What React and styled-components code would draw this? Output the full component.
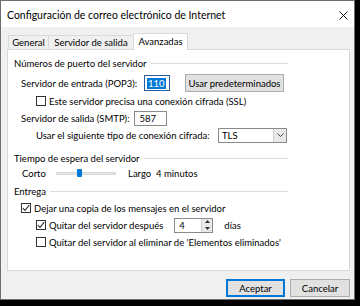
import styled, { createGlobalStyle } from 'styled-components';

const GlobalStyle = createGlobalStyle`
  html, body {
    margin: 0;
    background: #000;
  }

  body {
    font-family: Lato, 'Segoe UI', sans-serif;
    font-size: 9.5px;
    color: #000;
  }
`;

const Window = styled.div`
  box-sizing: border-box;
  width: 355px;
  height: 300px;
  display: flex;
  flex-direction: column;
  background: #f0f0f0;
  border: 1px solid #6e6e6e;
`;

const TitleBar = styled.div`
  height: 26px;
  display: flex;
  align-items: center;
  justify-content: space-between;
  padding: 2px 6px 0 6px;
  box-sizing: border-box;
  background: #fff;
  font-size: 10.5px;
`;

const Body = styled.div`
  display: flex;
  flex-direction: column;
  padding: 0 4px 0 6px;
`;

const TabStrip = styled.div`
  display: flex;
  align-items: flex-end;
  height: 16px;
  margin-top: 6px;
  padding-left: 1px;
`;

const Tab = styled.div`
  box-sizing: border-box;
  width: ${(p) => p.$w}px;
  height: ${(p) => (p.$active ? 17 : 14)}px;
  margin-right: -1px;
  margin-bottom: ${(p) => (p.$active ? -1 : 0)}px;
  display: flex;
  align-items: center;
  justify-content: center;
  padding-bottom: ${(p) => (p.$active ? 2 : 0)}px;
  background: ${(p) => (p.$active ? '#fff' : '#f0f0f0')};
  border: 1px solid #d9d9d9;
  border-bottom: none;
  position: relative;
  z-index: ${(p) => (p.$active ? 1 : 0)};
`;

const Panel = styled.div`
  box-sizing: border-box;
  height: 222px;
  padding: 5px 0 0 6px;
  background: #fff;
  border: 1px solid #d9d9d9;
`;

const Content = styled.div`
  width: 274px;
  display: flex;
  flex-direction: column;
`;

const Row = styled.div`
  display: flex;
  align-items: center;
  height: ${(p) => p.$h || 16}px;
  margin-top: ${(p) => p.$mt || 0}px;
  padding-left: ${(p) => p.$indent || 0}px;
  white-space: nowrap;
`;

const Rule = styled.div`
  flex: 1;
  height: 1px;
  margin-left: 4px;
  background: #dcdcdc;
`;

const Label = styled.span`
  flex: 0 0 ${(p) => p.$w}px;
`;

const TextBox = styled.div`
  box-sizing: border-box;
  width: ${(p) => p.$w}px;
  height: ${(p) => p.$h || 16}px;
  display: flex;
  align-items: center;
  padding-left: 2px;
  background: #fff;
  border: 1px solid ${(p) => (p.$focus ? '#2a5d9f' : '#8a8a8a')};
`;

const Selected = styled.span`
  background: #0078d7;
  color: #fff;
  padding: 0 1px;
`;

const Button = styled.div`
  box-sizing: border-box;
  width: ${(p) => p.$w}px;
  height: 18px;
  display: flex;
  align-items: center;
  justify-content: center;
  margin-left: ${(p) => p.$ml || 0}px;
  background: #e1e1e1;
  border: 1px solid ${(p) => (p.$default ? '#0078d7' : '#adadad')};
  box-shadow: ${(p) => (p.$default ? 'inset 0 0 0 1px #0078d7' : 'none')};
`;

const Combo = styled.div`
  box-sizing: border-box;
  width: 69px;
  height: 15px;
  display: flex;
  align-items: center;
  justify-content: space-between;
  padding-left: 3px;
  background: #fff;
  border: 1px solid #8a8a8a;
`;

const ComboArrow = styled.div`
  width: 12px;
  height: 100%;
  display: flex;
  align-items: center;
  justify-content: center;
  background: #e8e8e8;
  border-left: 1px solid #d0d0d0;
`;

const Box = styled.span`
  box-sizing: border-box;
  flex: 0 0 10px;
  width: 10px;
  height: 10px;
  margin-right: 3px;
  display: flex;
  align-items: center;
  justify-content: center;
  background: #fff;
  border: 1px solid #333;
`;

const SliderLabel = styled.span`
  flex: 0 0 ${(p) => p.$w}px;
`;

const Track = styled.div`
  position: relative;
  box-sizing: border-box;
  flex: 0 0 60px;
  height: 3px;
  margin-right: 12px;
  background: #e7eaea;
  border: 1px solid #d6d6d6;
`;

const Thumb = styled.div`
  position: absolute;
  left: 20px;
  top: -4px;
  width: 5px;
  height: 8px;
  background: #007ad9;
  border-radius: 1px;
`;

const Spin = styled.div`
  box-sizing: border-box;
  width: 39px;
  height: 15px;
  margin-left: 11px;
  display: flex;
  justify-content: space-between;
  padding-left: 4px;
  background: #fff;
  border: 1px solid #8a8a8a;
  align-items: center;
`;

const SpinButtons = styled.div`
  width: 10px;
  height: 100%;
  display: flex;
  flex-direction: column;
  background: #e8e8e8;
  border-left: 1px solid #d0d0d0;
`;

const SpinHalf = styled.div`
  flex: 1;
  display: flex;
  align-items: center;
  justify-content: center;
`;

const Footer = styled.div`
  display: flex;
  justify-content: flex-end;
  gap: 5px;
  margin-top: 8px;
`;

function Check({ checked }) {
  return (
    <Box>
      {checked && (
        <svg width="8" height="8" viewBox="0 0 8 8">
          <path d="M0.8 4.2 L3 6.4 L7.2 1.2" fill="none" stroke="#333" strokeWidth="1.1" />
        </svg>
      )}
    </Box>
  );
}

function Tri({ up }) {
  return (
    <svg width="5" height="3" viewBox="0 0 5 3">
      <path d={up ? 'M0 3 L2.5 0 L5 3 Z' : 'M0 0 L2.5 3 L5 0 Z'} fill="#333" />
    </svg>
  );
}

function Group({ title, mt }) {
  return (
    <Row $mt={mt}>
      <span>{title}</span>
      <Rule />
    </Row>
  );
}

export default function App() {
  return (
    <>
      <GlobalStyle />
      <Window>
        <TitleBar>
          <span>Configuración de correo electrónico de Internet</span>
          <svg width="9" height="9" viewBox="0 0 9 9">
            <path d="M0.5 0.5 L8.5 8.5 M8.5 0.5 L0.5 8.5" stroke="#111" strokeWidth="1" />
          </svg>
        </TitleBar>
        <Body>
          <TabStrip>
            <Tab $w={41}>General</Tab>
            <Tab $w={86}>Servidor de salida</Tab>
            <Tab $w={55} $active>Avanzadas</Tab>
          </TabStrip>
          <Panel>
            <Content>
              <Group title="Números de puerto del servidor" />

              <Row $h={20} $mt={2} $indent={7}>
                <Label $w={123}>Servidor de entrada (POP3):</Label>
                <TextBox $w={26} $focus>
                  <Selected>110</Selected>
                </TextBox>
                <Button $w={99} $ml={15}>Usar predeterminados</Button>
              </Row>

              <Row $indent={22}>
                <Check />
                Este servidor precisa una conexión cifrada (SSL)
              </Row>

              <Row $mt={1} $indent={7}>
                <Label $w={113}>Servidor de salida (SMTP):</Label>
                <TextBox $w={33} $h={15}>&nbsp;587</TextBox>
              </Row>

              <Row $mt={1} $indent={22}>
                <Label $w={182}>Usar el siguiente tipo de conexión cifrada:</Label>
                <Combo>
                  TLS
                  <ComboArrow>
                    <svg width="7" height="4" viewBox="0 0 7 4">
                      <path d="M0.5 0.5 L3.5 3.5 L6.5 0.5" fill="none" stroke="#444" strokeWidth="1" />
                    </svg>
                  </ComboArrow>
                </Combo>
              </Row>

              <Group title="Tiempo de espera del servidor" mt={7} />

              <Row $h={14} $indent={8}>
                <SliderLabel $w={34}>Corto</SliderLabel>
                <Track>
                  <Thumb />
                </Track>
                Largo&nbsp;&nbsp;4 minutos
              </Row>

              <Group title="Entrega" mt={3} />

              <Row $mt={1} $indent={7}>
                <Check checked />
                Dejar una copia de los mensajes en el servidor
              </Row>

              <Row $h={18} $indent={22}>
                <Check checked />
                Quitar del servidor después
                <Spin>
                  4
                  <SpinButtons>
                    <SpinHalf>
                      <Tri up />
                    </SpinHalf>
                    <SpinHalf>
                      <Tri />
                    </SpinHalf>
                  </SpinButtons>
                </Spin>
                <span style={{ marginLeft: 11 }}>días</span>
              </Row>

              <Row $indent={22}>
                <Check />
                Quitar del servidor al eliminar de 'Elementos eliminados'
              </Row>
            </Content>
          </Panel>
          <Footer>
            <Button $w={59} $default>Aceptar</Button>
            <Button $w={60}>Cancelar</Button>
          </Footer>
        </Body>
      </Window>
    </>
  );
}
